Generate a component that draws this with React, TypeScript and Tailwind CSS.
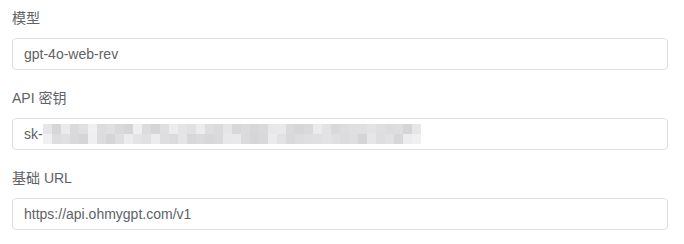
import React from 'react';

const mosaicGrays = [
  '#e6e6e8', '#dadadc', '#e2e2e4', '#ececee', '#d8d8da', '#e0e0e2', '#dcdcde', '#e8e8ea',
  '#d6d6d8', '#e4e4e6', '#dedee0', '#f0f0f2', '#d9d9db', '#e3e3e5', '#dbdbdd', '#e9e9eb',
  '#d5d5d7', '#e1e1e3', '#ebebed', '#dddddf', '#e5e5e7', '#d7d7d9', '#efeff1', '#dfdfe1',
];

// blurred-out key: two rows of grey squares
const Mosaic: React.FC = () => {
  const cols = 42;
  return (
    <div className="flex flex-col">
      {[0, 1].map((r) => (
        <div key={r} className="flex">
          {Array.from({ length: cols }).map((_, c) => (
            <div
              key={c}
              className="h-[10px] w-[9px]"
              style={{ backgroundColor: mosaicGrays[(c * 7 + r * 11 + ((c * c) % 5)) % mosaicGrays.length] }}
            />
          ))}
        </div>
      ))}
    </div>
  );
};

interface FieldProps {
  label: string;
  value?: string;
  secret?: boolean;
}

const Field: React.FC<FieldProps> = ({ label, value, secret }) => (
  <div className="mb-[18px]">
    <div className="mb-[10px] text-sm leading-[20px] text-[#606266]">{label}</div>
    <div className="flex h-[32px] items-center rounded-[4px] border border-[#dcdfe6] bg-white px-[11px] text-sm text-[#606266]">
      {secret ? (
        <>
          <span>sk-</span>
          <Mosaic />
        </>
      ) : (
        <span>{value}</span>
      )}
    </div>
  </div>
);

export default function App() {
  return (
    <div
      className="h-[244px] w-[684px] bg-white pl-3 pr-4 pt-2"
      style={{ fontFamily: '"Liberation Sans", "Noto Sans CJK SC", sans-serif' }}
    >
      <Field label="模型" value="gpt-4o-web-rev" />
      <Field label="API 密钥" secret />
      <Field label="基础 URL" value="https://api.ohmygpt.com/v1" />
    </div>
  );
}
